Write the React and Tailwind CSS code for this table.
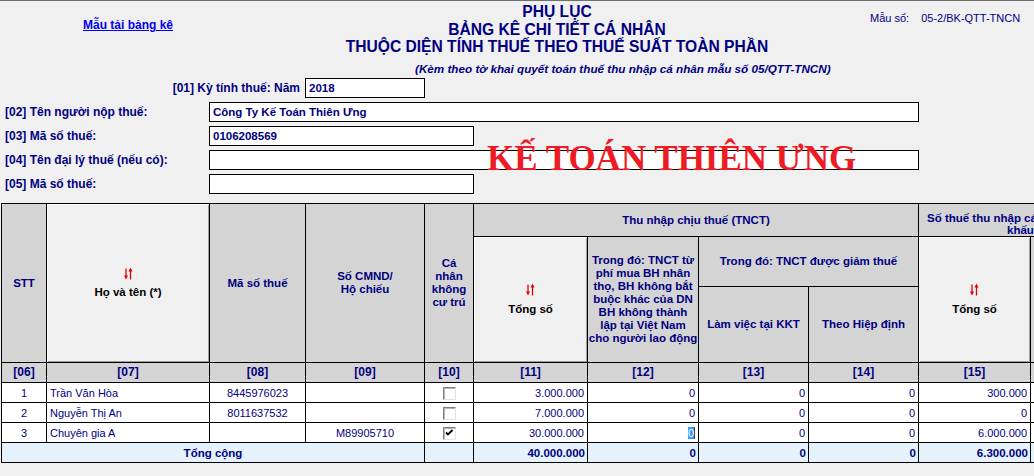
import React from "react";

const th =
  "border border-black bg-[#d4d4d4] text-[#000080] font-bold text-[11.5px] leading-[13px] text-center align-middle p-0";
const sortTh =
  "border border-black bg-[#f0f0f0] shadow-[inset_1px_1px_0_#ffffff,inset_-1px_-1px_0_#a0a0a0] text-black font-bold text-[11.5px] leading-[13px] text-center align-middle p-0";
const td = "border border-black bg-white text-[#000080] text-[11px] leading-[18px] p-0";
const tot = "border border-black bg-[#e5f1fb] text-[#000080] text-[11.5px] font-bold leading-[18px] p-0";

const SortIcon = () => (
  <svg width="9" height="13" viewBox="0 0 9 13" className="mx-auto block">
    <line x1="2" y1="1.5" x2="2" y2="9.5" stroke="#e00000" strokeWidth="1.3" />
    <polygon points="0,8.5 4,8.5 2,12.5" fill="#e00000" />
    <line x1="6.5" y1="3.5" x2="6.5" y2="12.5" stroke="#e00000" strokeWidth="1.3" />
    <polygon points="4.5,4.5 8.5,4.5 6.5,0.5" fill="#e00000" />
  </svg>
);

const Box = ({ checked }) => (
  <span className="inline-block w-[13px] h-[13px] align-middle bg-white border border-t-[#808080] border-l-[#808080] border-r-[#e3e3e3] border-b-[#e3e3e3] shadow-[inset_1px_1px_0_#b4b4b4]">
    {checked && (
      <svg width="11" height="11" viewBox="0 0 11 11" className="block">
        <path d="M2 4.5 L4 6.5 L8.5 2" fill="none" stroke="#000" strokeWidth="1.8" />
      </svg>
    )}
  </span>
);

const rows = [
  { stt: "1", name: "Trần Văn Hòa", mst: "8445976023", cmnd: "", cb: false, v: ["3.000.000", "0", "0", "0", "300.000"] },
  { stt: "2", name: "Nguyễn Thị An", mst: "8011637532", cmnd: "", cb: false, v: ["7.000.000", "0", "0", "0", "0"] },
  { stt: "3", name: "Chuyên gia A", mst: "", cmnd: "M89905710", cb: true, v: ["30.000.000", "0", "0", "0", "6.000.000"] },
];

const col12 = [
  "Trong đó: TNCT từ",
  "phí mua BH nhân",
  "thọ, BH không bắt",
  "buộc khác của DN",
  "BH không thành",
  "lập tại Việt Nam",
  "cho người lao động",
];

export default function App() {
  return (
    <div className="relative w-full h-[476px] overflow-hidden bg-[#f0f0f0] border-t border-[#6e6e6e] font-['Liberation_Sans',Arial,sans-serif]">
      {/* header */}
      <div className="h-[77px]">
        <div className="flex">
          <div className="w-[300px] pl-[83px] pt-[11px]">
            <a href="#" className="text-[12px] leading-[14px] font-bold text-[#0000ee] underline">
              Mẫu tải bảng kê
            </a>
          </div>
          <div className="flex-1 pt-[2px] text-center text-[15.6px] leading-[17.5px] font-bold text-[#000080]">
            <div>PHỤ LỤC</div>
            <div>BẢNG KÊ CHI TIẾT CÁ NHÂN</div>
            <div>THUỘC DIỆN TÍNH THUẾ THEO THUẾ SUẤT TOÀN PHẦN</div>
          </div>
          <div className="w-[220px] pl-[56px] pt-[11px] text-[11px] leading-[13px] text-[#000080] whitespace-nowrap">
            Mẫu số:<span className="ml-[12px]">05-2/BK-QTT-TNCN</span>
          </div>
        </div>
        <div className="mt-[6px] pl-[415px] text-[11.7px] leading-[14px] font-bold italic text-[#000080] whitespace-nowrap">
          (Kèm theo tờ khai quyết toán thuế thu nhập cá nhân mẫu số 05/QTT-TNCN)
        </div>
      </div>

      {/* form */}
      <div className="flex flex-col gap-[4px] text-[12px] font-bold text-[#000080]">
        <div className="flex items-center h-[20px]">
          <div className="w-[305px] pr-[5px] text-right">[01] Kỳ tính thuế: Năm</div>
          <div className="w-[120px] h-[20px] border border-black bg-white pl-[3px] text-[11.5px] leading-[18px]">2018</div>
        </div>
        <div className="flex items-center h-[20px]">
          <div className="w-[209px] pl-[5px]">[02] Tên người nộp thuế:</div>
          <div className="w-[710px] h-[20px] border border-black bg-white pl-[3px] text-[11.5px] leading-[18px]">Công Ty Kế Toán Thiên Ưng</div>
        </div>
        <div className="flex items-center h-[20px]">
          <div className="w-[209px] pl-[5px]">[03] Mã số thuế:</div>
          <div className="w-[265px] h-[20px] border border-black bg-white pl-[3px] text-[11.5px] leading-[18px]">0106208569</div>
        </div>
        <div className="flex items-center h-[20px]">
          <div className="w-[209px] pl-[5px]">[04] Tên đại lý thuế (nếu có):</div>
          <div className="w-[710px] h-[20px] border border-black bg-white"></div>
        </div>
        <div className="flex items-center h-[20px]">
          <div className="w-[209px] pl-[5px]">[05] Mã số thuế:</div>
          <div className="w-[265px] h-[20px] border border-black bg-white"></div>
        </div>
      </div>

      <div className="absolute left-[487px] top-[140px] text-[35px] leading-[35px] font-bold text-[#ed1c24] whitespace-nowrap pointer-events-none font-['Liberation_Serif','Times_New_Roman',serif]">
        KẾ TOÁN THIÊN ƯNG
      </div>

      {/* table */}
      <table className="ml-px mt-[9px] border-collapse table-fixed w-[1141px]">
        <colgroup>
          <col className="w-[45px]" />
          <col className="w-[163px]" />
          <col className="w-[96px]" />
          <col className="w-[119px]" />
          <col className="w-[49px]" />
          <col className="w-[114px]" />
          <col className="w-[111px]" />
          <col className="w-[110px]" />
          <col className="w-[110px]" />
          <col className="w-[112px]" />
          <col className="w-[112px]" />
        </colgroup>
        <thead>
          <tr className="h-[33px]">
            <th rowSpan={3} className={th}>STT</th>
            <th rowSpan={3} className={sortTh}>
              <SortIcon />
              <div className="mt-[6px]">Họ và tên (*)</div>
            </th>
            <th rowSpan={3} className={th}>Mã số thuế</th>
            <th rowSpan={3} className={th}>
              Số CMND/
              <br />
              Hộ chiếu
            </th>
            <th rowSpan={3} className={th}>
              Cá
              <br />
              nhân
              <br />
              không
              <br />
              cư trú
            </th>
            <th colSpan={4} className={th}>Thu nhập chịu thuế (TNCT)</th>
            <th colSpan={2} className={th + " !align-top pt-[8px] !leading-[12px]"}>
              <div className="text-left pl-[8px] whitespace-nowrap">Số thuế thu nhập cá nhân đã</div>
              <div className="text-left pl-[88px] whitespace-nowrap">khấu trừ</div>
            </th>
          </tr>
          <tr className="h-[50px]">
            <th rowSpan={2} className={sortTh}>
              <SortIcon />
              <div className="mt-[7px]">Tổng số</div>
            </th>
            <th rowSpan={2} className={th}>
              {col12.map((l) => (
                <div key={l} className="whitespace-nowrap">{l}</div>
              ))}
            </th>
            <th colSpan={2} className={th}>Trong đó: TNCT được giảm thuế</th>
            <th rowSpan={2} className={sortTh}>
              <SortIcon />
              <div className="mt-[7px]">Tổng số</div>
            </th>
            <th rowSpan={2} className={th}></th>
          </tr>
          <tr className="h-[76px]">
            <th className={th}>Làm việc tại KKT</th>
            <th className={th}>Theo Hiệp định</th>
          </tr>
          <tr className="h-[20px]">
            {["[06]", "[07]", "[08]", "[09]", "[10]", "[11]", "[12]", "[13]", "[14]", "[15]", ""].map((c, i) => (
              <th key={i} className={th + " !text-[12px]"}>{c}</th>
            ))}
          </tr>
        </thead>
        <tbody>
          {rows.map((r) => (
            <tr key={r.stt} className="h-[20px]">
              <td className={td + " text-center"}>{r.stt}</td>
              <td className={td + " pl-[3px] whitespace-nowrap"}>{r.name}</td>
              <td className={td + " text-center"}>{r.mst}</td>
              <td className={td + " text-center"}>{r.cmnd}</td>
              <td className={td + " text-center"}>
                <Box checked={r.cb} />
              </td>
              {r.v.map((n, i) => (
                <td key={i} className={td + " text-right pr-[3px]"}>
                  {r.stt === "3" && i === 1 ? (
                    <span className="bg-[#3399ff] text-white border-r border-[#5a3a1a]">0</span>
                  ) : (
                    n
                  )}
                </td>
              ))}
              <td className={td}></td>
            </tr>
          ))}
          <tr className="h-[20px]">
            <td colSpan={4} className={tot + " text-center"}>Tổng cộng</td>
            <td className={tot}></td>
            <td className={tot + " text-right pr-[2px]"}>40.000.000</td>
            <td className={tot + " text-right pr-[2px]"}>0</td>
            <td className={tot + " text-right pr-[2px]"}>0</td>
            <td className={tot + " text-right pr-[2px]"}>0</td>
            <td className={tot + " text-right pr-[2px]"}>6.300.000</td>
            <td className={tot}></td>
          </tr>
        </tbody>
      </table>
    </div>
  );
}
